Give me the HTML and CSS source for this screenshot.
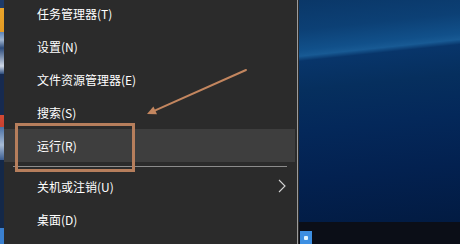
FILE: index.html
```html
<!DOCTYPE html>
<html lang="zh-CN">
<head>
<meta charset="utf-8">
<title>Win+X 菜单</title>
<link rel="stylesheet" href="styles.css">
</head>
<body>
<div class="screen">
  <div class="strip"></div>
  <div class="menu">
    <div class="list">
      <div class="item">任务管理器(T)</div>
      <div class="item">设置(N)</div>
      <div class="item">文件资源管理器(E)</div>
      <div class="item">搜索(S)</div>
      <div class="item active">运行(R)</div>
      <div class="sep"><div class="line"></div></div>
      <div class="item sub">关机或注销(U)
        <svg class="chev" width="8" height="14" viewBox="0 0 8 14"><polyline points="1,1 7,7 1,13" fill="none" stroke="#d4d4d4" stroke-width="1.1"/></svg>
      </div>
      <div class="item">桌面(D)</div>
    </div>
  </div>
  <div class="desktop">
    <div class="wall"></div>
    <div class="taskbar"><div class="start"><div class="dot"></div></div></div>
  </div>
  <div class="mark"></div>
  <svg class="arrow" width="460" height="244" viewBox="0 0 460 244">
    <line x1="246" y1="70" x2="153" y2="111.3" stroke="#c3865f" stroke-width="2" stroke-linecap="round"/>
    <polygon points="147,114 157,114.2 153.4,106.4" fill="#c3865f"/>
  </svg>
</div>
</body>
</html>
```

FILE: styles.css
```css
html, body {
  margin: 0;
  padding: 0;
  background: #2b2b2b;
}
.screen {
  position: relative;
  width: 460px;
  height: 244px;
  overflow: hidden;
  display: flex;
  font-family: "Noto Sans CJK SC", "Noto Sans", sans-serif;
}
.strip {
  width: 4px;
  flex: none;
  background: linear-gradient(to bottom,
    #1d3b6a 0, #1d3b6a 8px,
    #e9a52a 8px, #e39a24 32px,
    #5d84b8 32px, #9fb4cf 40px, #2c4b7b 48px, #cfd8e6 66px, #2c4b7b 74px,
    #162a50 74px, #162a50 115px,
    #d24a34 115px, #c84030 127px,
    #4a70a4 127px, #a8bcd6 145px, #3a5c90 160px,
    #142848 160px, #142848 228px,
    #3a80d0 228px, #3a80d0 244px);
}
.menu {
  width: 293px;
  flex: none;
  background: #2b2b2b;
  border-right: 1px solid #9c9c9c;
  margin-right: 1px;
}
.list {
  margin-top: -3px;
}
.item {
  height: 33px;
  display: flex;
  align-items: center;
  justify-content: space-between;
  padding-left: 33px;
  padding-right: 11px;
  color: #ffffff;
  font-size: 12px;
  line-height: 1;
}
.item.active {
  background: #3e3e3e;
  margin-right: 2px;
}
.chev {
  display: block;
  margin-top: -2px;
}
.sep {
  height: 8px;
  display: flex;
  align-items: center;
  padding: 0 10px 0 9px;
}
.line {
  flex: 1;
  height: 1px;
  background: #8c8c8c;
}
.desktop {
  flex: 1;
  display: flex;
  flex-direction: column;
}
.wall {
  flex: 1;
  background: linear-gradient(174deg,
    #0a3768 0, #0c4075 30px, #11508a 50px, #185a94 56px,
    #08356a 61px, #062f5e 90px, #04285a 130px, #032150 180px, #021b42 238px);
}
.taskbar {
  height: 22px;
  flex: none;
  background: #0b0e17;
  display: flex;
}
.start {
  width: 12px;
  height: 13px;
  margin-top: 9px;
  margin-left: 1px;
  background: #3d8fe2;
  display: flex;
  align-items: center;
  justify-content: center;
}
.dot {
  width: 4px;
  height: 4px;
  background: #dff4ff;
  border-radius: 1px;
}
.mark {
  position: absolute;
  left: 15px;
  top: 123px;
  width: 114px;
  height: 43px;
  border: 3px solid #b67e5c;
}
.arrow {
  position: absolute;
  left: 0;
  top: 0;
}
```
